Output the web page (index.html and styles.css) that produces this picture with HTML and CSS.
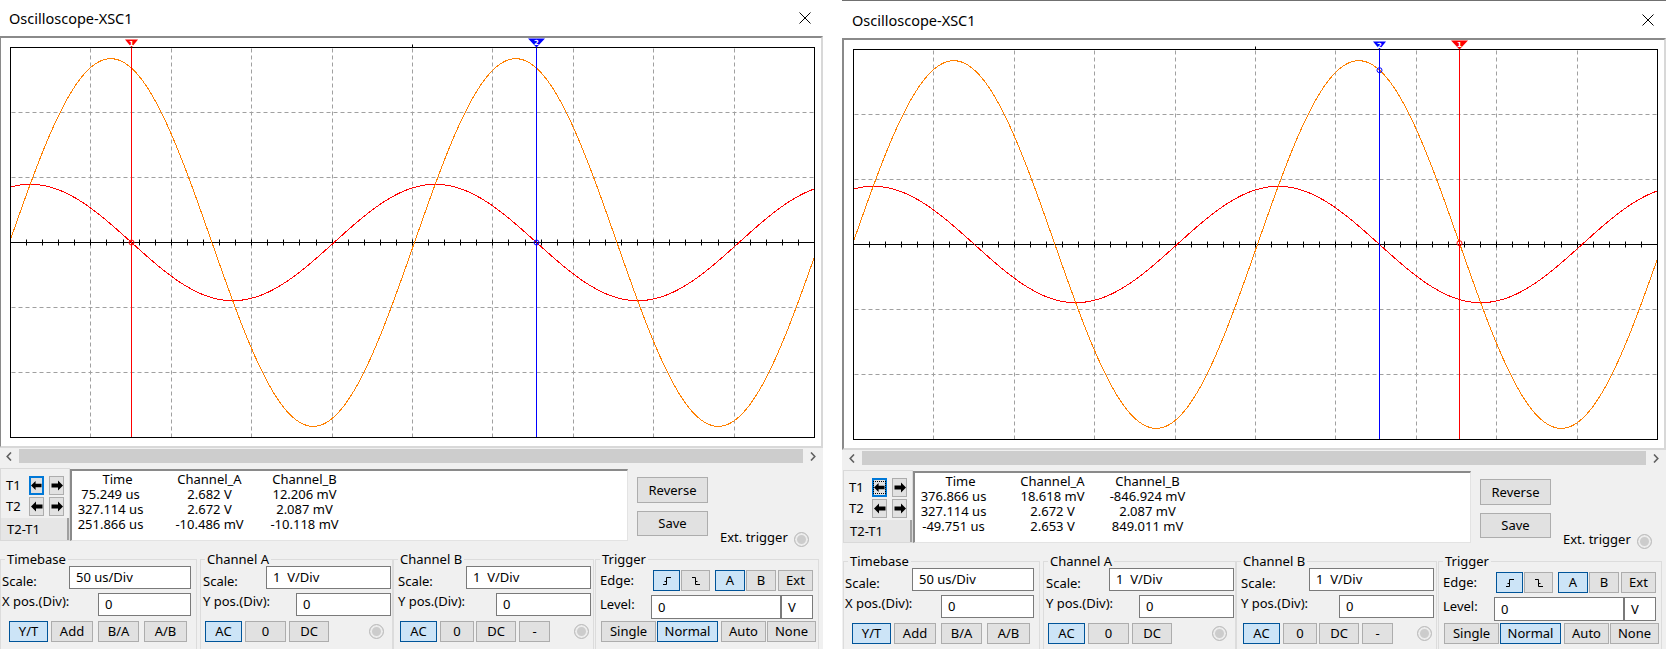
FILE: index.html
```html
<!DOCTYPE html>
<html>
<head>
<meta charset="utf-8">
<title>Oscilloscope-XSC1</title>
<link rel="stylesheet" href="styles.css">
</head>
<body>
<div class="win win-l">
  <div class="titlebar"><span class="title">Oscilloscope-XSC1</span>
    <svg class="close" width="12" height="12" viewBox="0 0 12 12"><path d="M0.5 0.5 L11.5 11.5 M11.5 0.5 L0.5 11.5" stroke="#000" stroke-width="1"/></svg></div>
  <div class="frame"><svg class="plot" width="805" height="400" data-t1="75.249" data-t2="327.114" data-mark="B" data-big="2"></svg></div>
  <div class="hscroll">
    <span class="sbtn"><svg width="6" height="9" viewBox="0 0 6 9"><path d="M5 0.5 L1.2 4.5 L5 8.5" fill="none" stroke="#606060" stroke-width="1.6"/></svg></span>
    <span class="thumb"></span>
    <span class="sbtn"><svg width="6" height="9" viewBox="0 0 6 9"><path d="M1 0.5 L4.8 4.5 L1 8.5" fill="none" stroke="#606060" stroke-width="1.6"/></svg></span>
  </div>
  <div class="panel">
    <div class="toprow">
      <div class="tbox">
        <div class="trow"><span class="tlab">T1</span><span class="abtn focus"><svg width="12" height="11" viewBox="0 0 12 11"><path d="M0 5.5 L5 0.5 L5 3.5 L11.5 3.5 L11.5 7.5 L5 7.5 L5 10.5 Z" fill="#000"/></svg></span><span class="abtn"><svg width="12" height="11" viewBox="0 0 12 11"><path d="M12 5.5 L7 0.5 L7 3.5 L0.5 3.5 L0.5 7.5 L7 7.5 L7 10.5 Z" fill="#000"/></svg></span></div>
        <div class="trow t2"><span class="tlab">T2</span><span class="abtn"><svg width="12" height="11" viewBox="0 0 12 11"><path d="M0 5.5 L5 0.5 L5 3.5 L11.5 3.5 L11.5 7.5 L5 7.5 L5 10.5 Z" fill="#000"/></svg></span><span class="abtn"><svg width="12" height="11" viewBox="0 0 12 11"><path d="M12 5.5 L7 0.5 L7 3.5 L0.5 3.5 L0.5 7.5 L7 7.5 L7 10.5 Z" fill="#000"/></svg></span></div>
        <div class="tdiff">T2-T1</div>
      </div>
      <div class="data">
        <div class="col c1"><div class="hd">Time</div><div>75.249 us</div><div>327.114 us</div><div>251.866 us</div></div>
        <div class="col c2"><div>Channel_A</div><div>2.682 V</div><div>2.672 V</div><div>-10.486 mV</div></div>
        <div class="col c3"><div>Channel_B</div><div>12.206 mV</div><div>2.087 mV</div><div>-10.118 mV</div></div>
      </div>
      <div class="actions"><span class="btn act">Reverse</span><span class="btn act save">Save</span></div>
      <div class="ext"><span>Ext. trigger</span><span class="radio"></span></div>
    </div>
    <div class="groups">
      <fieldset class="g g-tb"><legend>Timebase</legend>
        <div class="gin">
          <div class="row ra"><span class="lab la">Scale:</span><span class="inp tb-s">50 us/Div</span></div>
          <div class="row rb"><span class="lab lb">X pos.(Div):</span><span class="inp tb-p">0</span></div>
          <div class="row rc"><span class="btn on b-yt">Y/T</span><span class="btn b-add">Add</span><span class="btn b-ba">B/A</span><span class="btn b-ab">A/B</span></div>
        </div>
      </fieldset>
      <fieldset class="g g-ca"><legend>Channel A</legend>
        <div class="gin">
          <div class="row ra"><span class="lab la">Scale:</span><span class="inp ch-s">1&nbsp; V/Div</span></div>
          <div class="row rb"><span class="lab lb">Y pos.(Div):</span><span class="inp ch-p">0</span></div>
          <div class="row rc"><span class="btn on b-ac">AC</span><span class="btn b-0">0</span><span class="btn b-dc">DC</span><span class="radio r-ch"></span></div>
        </div>
      </fieldset>
      <fieldset class="g g-cb"><legend>Channel B</legend>
        <div class="gin">
          <div class="row ra"><span class="lab la">Scale:</span><span class="inp ch-s">1&nbsp; V/Div</span></div>
          <div class="row rb"><span class="lab lb">Y pos.(Div):</span><span class="inp ch-p">0</span></div>
          <div class="row rc"><span class="btn on b-ac">AC</span><span class="btn b-0b">0</span><span class="btn b-dcb">DC</span><span class="btn b-min">-</span><span class="radio r-ch"></span></div>
        </div>
      </fieldset>
      <fieldset class="g g-tr"><legend>Trigger</legend>
        <div class="gin">
          <div class="row tra"><span class="lab tlab-e">Edge:</span><span class="btn on e-r"><svg width="12" height="12" viewBox="0 0 12 12"><path d="M2 9.5 H5.5 V2.5 H10 M3.5 6.5 H5.5" fill="none" stroke="#000" stroke-width="1"/></svg></span><span class="btn e-f"><svg width="12" height="12" viewBox="0 0 12 12"><path d="M2 2.5 H5.5 V9.5 H10 M5.5 6.5 H7.5" fill="none" stroke="#000" stroke-width="1"/></svg></span><span class="btn on e-a">A</span><span class="btn e-b">B</span><span class="btn e-x">Ext</span></div>
          <div class="row trb"><span class="lab tlab-l">Level:</span><span class="inp lvl">0</span><span class="inp vbox">V</span></div>
          <div class="row trc"><span class="btn m-s">Single</span><span class="btn on m-n">Normal</span><span class="btn m-a">Auto</span><span class="btn m-o">None</span></div>
        </div>
      </fieldset>
    </div>
  </div>
</div>

<div class="win win-r">
  <div class="titlebar"><span class="title">Oscilloscope-XSC1</span>
    <svg class="close" width="12" height="12" viewBox="0 0 12 12"><path d="M0.5 0.5 L11.5 11.5 M11.5 0.5 L0.5 11.5" stroke="#000" stroke-width="1"/></svg></div>
  <div class="frame"><svg class="plot" width="805" height="400" data-t1="376.866" data-t2="327.114" data-mark="A" data-big="1"></svg></div>
  <div class="hscroll">
    <span class="sbtn"><svg width="6" height="9" viewBox="0 0 6 9"><path d="M5 0.5 L1.2 4.5 L5 8.5" fill="none" stroke="#606060" stroke-width="1.6"/></svg></span>
    <span class="thumb"></span>
    <span class="sbtn"><svg width="6" height="9" viewBox="0 0 6 9"><path d="M1 0.5 L4.8 4.5 L1 8.5" fill="none" stroke="#606060" stroke-width="1.6"/></svg></span>
  </div>
  <div class="panel">
    <div class="toprow">
      <div class="tbox">
        <div class="trow"><span class="tlab">T1</span><span class="abtn focus dotted"><svg width="12" height="11" viewBox="0 0 12 11"><path d="M0 5.5 L5 0.5 L5 3.5 L11.5 3.5 L11.5 7.5 L5 7.5 L5 10.5 Z" fill="#000"/></svg></span><span class="abtn"><svg width="12" height="11" viewBox="0 0 12 11"><path d="M12 5.5 L7 0.5 L7 3.5 L0.5 3.5 L0.5 7.5 L7 7.5 L7 10.5 Z" fill="#000"/></svg></span></div>
        <div class="trow t2"><span class="tlab">T2</span><span class="abtn"><svg width="12" height="11" viewBox="0 0 12 11"><path d="M0 5.5 L5 0.5 L5 3.5 L11.5 3.5 L11.5 7.5 L5 7.5 L5 10.5 Z" fill="#000"/></svg></span><span class="abtn"><svg width="12" height="11" viewBox="0 0 12 11"><path d="M12 5.5 L7 0.5 L7 3.5 L0.5 3.5 L0.5 7.5 L7 7.5 L7 10.5 Z" fill="#000"/></svg></span></div>
        <div class="tdiff">T2-T1</div>
      </div>
      <div class="data">
        <div class="col c1"><div class="hd">Time</div><div>376.866 us</div><div>327.114 us</div><div>-49.751 us</div></div>
        <div class="col c2"><div>Channel_A</div><div>18.618 mV</div><div>2.672 V</div><div>2.653 V</div></div>
        <div class="col c3"><div>Channel_B</div><div>-846.924 mV</div><div>2.087 mV</div><div>849.011 mV</div></div>
      </div>
      <div class="actions"><span class="btn act">Reverse</span><span class="btn act save">Save</span></div>
      <div class="ext"><span>Ext. trigger</span><span class="radio"></span></div>
    </div>
    <div class="groups">
      <fieldset class="g g-tb"><legend>Timebase</legend>
        <div class="gin">
          <div class="row ra"><span class="lab la">Scale:</span><span class="inp tb-s">50 us/Div</span></div>
          <div class="row rb"><span class="lab lb">X pos.(Div):</span><span class="inp tb-p">0</span></div>
          <div class="row rc"><span class="btn on b-yt">Y/T</span><span class="btn b-add">Add</span><span class="btn b-ba">B/A</span><span class="btn b-ab">A/B</span></div>
        </div>
      </fieldset>
      <fieldset class="g g-ca"><legend>Channel A</legend>
        <div class="gin">
          <div class="row ra"><span class="lab la">Scale:</span><span class="inp ch-s">1&nbsp; V/Div</span></div>
          <div class="row rb"><span class="lab lb">Y pos.(Div):</span><span class="inp ch-p">0</span></div>
          <div class="row rc"><span class="btn on b-ac">AC</span><span class="btn b-0">0</span><span class="btn b-dc">DC</span><span class="radio r-ch"></span></div>
        </div>
      </fieldset>
      <fieldset class="g g-cb"><legend>Channel B</legend>
        <div class="gin">
          <div class="row ra"><span class="lab la">Scale:</span><span class="inp ch-s">1&nbsp; V/Div</span></div>
          <div class="row rb"><span class="lab lb">Y pos.(Div):</span><span class="inp ch-p">0</span></div>
          <div class="row rc"><span class="btn on b-ac">AC</span><span class="btn b-0b">0</span><span class="btn b-dcb">DC</span><span class="btn b-min">-</span><span class="radio r-ch"></span></div>
        </div>
      </fieldset>
      <fieldset class="g g-tr"><legend>Trigger</legend>
        <div class="gin">
          <div class="row tra"><span class="lab tlab-e">Edge:</span><span class="btn on e-r"><svg width="12" height="12" viewBox="0 0 12 12"><path d="M2 9.5 H5.5 V2.5 H10 M3.5 6.5 H5.5" fill="none" stroke="#000" stroke-width="1"/></svg></span><span class="btn e-f"><svg width="12" height="12" viewBox="0 0 12 12"><path d="M2 2.5 H5.5 V9.5 H10 M5.5 6.5 H7.5" fill="none" stroke="#000" stroke-width="1"/></svg></span><span class="btn on e-a">A</span><span class="btn e-b">B</span><span class="btn e-x">Ext</span></div>
          <div class="row trb"><span class="lab tlab-l">Level:</span><span class="inp lvl">0</span><span class="inp vbox">V</span></div>
          <div class="row trc"><span class="btn m-s">Single</span><span class="btn on m-n">Normal</span><span class="btn m-a">Auto</span><span class="btn m-o">None</span></div>
        </div>
      </fieldset>
    </div>
  </div>
</div>
<script src="script.js"></script>
</body>
</html>
```
FILE: styles.css
```css
* { box-sizing: border-box; }
html, body { margin: 0; padding: 0; }
body {
  width: 1666px; height: 649px; overflow: hidden; background: #fff;
  display: flex; align-items: flex-start;
  font-family: "Noto Sans", "Open Sans", sans-serif; font-size: 13px; line-height: 15px; color: #000;
}
.win { flex: none; width: 824px; height: 660px; background: #f0f0f0; border-top: 1px solid #707070; }
.win-l { margin-left: -1px; margin-top: -2px; }
.win-r { margin-left: 19px; }

.titlebar { height: 37px; background: #fff; display: flex; align-items: center; justify-content: space-between; padding: 0 12px 0 10px; }
.title { font-size: 14.5px; line-height: 20px; }
.close { display: block; }

.frame { height: 412px; background: #fff; border: 2px solid; border-color: #8a8a8a #d8d8d8 #d8d8d8 #8a8a8a; padding: 0 6px 8px 9px; }
.plot { display: block; }
.plot .grid { stroke: #a0a0a0; stroke-width: 1; stroke-dasharray: 4 3; fill: none; }
.plot .axis { stroke: #000; stroke-width: 1; fill: none; }
.plot .wave { fill: none; stroke-width: 1; }

.hscroll { height: 16px; display: flex; background: #f0f0f0; }
.sbtn { width: 20px; flex: none; display: flex; align-items: center; justify-content: center; }
.thumb { flex: 1; background: #cdcdcd; margin: 1px 0; }

.panel { padding: 4px 0 0 1px; }
.toprow { display: flex; height: 73px; }

.tbox { width: 70px; height: 73px; border: 1px solid #d9d9d9; display: flex; flex-direction: column; padding-top: 7px; }
.trow { display: flex; align-items: center; height: 19px; }
.trow.t2 { margin-top: 2px; }
.tlab { width: 28px; padding-left: 5px; }
.abtn { width: 15px; height: 19px; background: #e1e1e1; border: 1px solid #adadad; display: flex; align-items: center; justify-content: center; margin-right: 5px; }
.abtn.focus { border: 2px solid #0078d7; }
.abtn.dotted svg { outline: 1px dotted #000; }
.tdiff { margin-top: auto; height: 22px; background: #e6e6e6; padding-left: 6px; line-height: 22px; border-right: 2px solid #a0a0a0; }

.data { width: 558px; height: 72px; margin-top: 1px; background: #fff; border-style: solid; border-width: 2px 1px 1px 2px; border-color: #8a8a8a #e3e3e3 #e3e3e3 #8a8a8a; display: flex; padding-top: 1px; }
.col { display: flex; flex-direction: column; align-items: center; white-space: nowrap; }
.c1 { width: 77px; }
.c1 .hd { margin-left: 14px; }
.c2 { width: 121px; }
.c3 { width: 69px; }

.actions { margin-left: 9px; display: flex; flex-direction: column; padding-top: 9px; }
.btn { display: flex; align-items: center; justify-content: center; flex: none; background: #e1e1e1; border: 1px solid #adadad; height: 21px; white-space: nowrap; }
.btn.on { background: #cce4f7; border-color: #005499; }
.act { width: 71px; height: 26px; }
.act.save { margin-top: 8px; height: 25px; }

.ext { margin-left: 12px; margin-top: 61px; display: flex; align-items: center; height: 16px; white-space: nowrap; }
.ext .radio { margin-left: 6px; margin-top: 4px; }
.radio { flex: none; width: 15px; height: 15px; border-radius: 50%; border: 1px solid #bcbcbc; background: #cccccc; box-shadow: inset 0 0 0 2px #ececec; }

.groups { display: flex; margin-top: 11px; }
fieldset.g { margin: 0; padding: 0; border: 1px solid #dcdcdc; height: 110px; min-width: 0; }
fieldset.g legend { margin-left: 4px; padding: 0 2px; line-height: 14px; height: 14px; }
.g-tb { width: 197px; }
.g-ca { width: 193px; margin-left: 3px !important; }
.g-cb { width: 201px; margin-left: 0 !important; }
.g-tr { width: 224px; margin-left: 1px !important; }

.gin { display: flex; flex-direction: column; }
.row { display: flex; align-items: center; }
.ra { height: 23px; justify-content: space-between; }
.rb { height: 23px; margin-top: 4px; justify-content: space-between; }
.rc { height: 21px; margin-top: 5px; }
.la { margin-top: 7px; }
.lb { margin-bottom: 7px; }
.inp { height: 23px; background: #fff; border: 1px solid #7a7a7a; padding-left: 6px; display: flex; align-items: center; white-space: nowrap; }

.g-tb .gin { padding: 0 5px 0 1px; }
.tb-s { width: 122px; }
.tb-p { width: 93px; }
.b-yt { width: 39px; margin-left: 7px; }
.b-add { width: 42px; margin-left: 3px; }
.b-ba { width: 41px; margin-left: 5px; }
.b-ab { width: 43px; margin-left: 5px; }

.g-ca .gin { padding: 0 1px 0 2px; }
.ch-s { width: 125px; }
.ch-p { width: 95px; }
.g-ca .b-ac { width: 37px; margin-left: 2px; }
.b-0 { width: 41px; margin-left: 3px; }
.b-dc { width: 40px; margin-left: 3px; }
.r-ch { margin-left: auto; margin-right: 7px; }

.g-cb .gin { padding: 0 2px 0 4px; }
.g-cb .b-ac { width: 37px; margin-left: 2px; }
.b-0b { width: 34px; margin-left: 3px; }
.b-dcb { width: 40px; margin-left: 2px; }
.b-min { width: 31px; margin-left: 3px; }
.g-cb .r-ch { margin-right: 2px; }

.g-tr .gin { padding: 0 2px 0 4px; }
.tra { height: 21px; margin-top: 4px; }
.trb { height: 24px; margin-top: 4px; }
.trc { height: 21px; margin-top: 2px; }
.tlab-e { width: 53px; }
.tlab-l { width: 51px; margin-bottom: 5px; }
.e-r { width: 27px; }
.e-f { width: 29px; margin-left: 1px; }
.e-a { width: 30px; margin-left: 5px; }
.e-b { width: 30px; margin-left: 1px; }
.e-x { width: 35px; margin-left: 2px; }
.lvl { width: 130px; height: 24px; }
.vbox { width: 32px; height: 24px; margin-left: 0; }
.m-s { width: 55px; margin-left: 1px; }
.m-n { width: 61px; margin-left: 1px; }
.m-a { width: 45px; margin-left: 3px; }
.m-o { width: 49px; margin-left: 1px; }
```
FILE: script.js
```js
(function () {
  var T = 251.865;
  var rad = Math.PI / 180;
  function A(t) { return 2.828 * Math.sin(2 * Math.PI * t / T + 0.94 * rad); }
  function B(t) { return 0.895 * Math.sin(2 * Math.PI * t / T + 72.44 * rad); }
  var W = 804, H = 390, DX = 80.4, DY = 65, CY = 195, TOP = 9;
  function xOf(t) { return Math.round(t / 50 * DX); }
  function wave(f, color) {
    var pts = [];
    for (var px = 0; px <= W; px++) {
      var t = px / DX * 50;
      pts.push(px + ',' + (CY - DY * f(t)).toFixed(2));
    }
    return '<polyline class="wave" shape-rendering="crispEdges" stroke="' + color + '" points="' + pts.join(' ') + '"/>';
  }
  function marker(x, color, num, big) {
    var w = big ? 17 : 13, h = big ? 9 : 8;
    var s = '<path d="M' + (x - w / 2) + ' ' + (-h) + ' H' + (x + w / 2) + ' L' + x + ' 0 Z" fill="' + color + '"/>';
    s += '<text x="' + x + '" y="' + (-h + 6.5) + '" text-anchor="middle" font-size="7" font-weight="bold" font-family="DejaVu Sans, sans-serif" fill="#fff">' + num + '</text>';
    return s;
  }
  var svgs = document.querySelectorAll('svg.plot');
  for (var n = 0; n < svgs.length; n++) {
    var svg = svgs[n];
    var t1 = parseFloat(svg.getAttribute('data-t1'));
    var t2 = parseFloat(svg.getAttribute('data-t2'));
    var ch = svg.getAttribute('data-mark') === 'A' ? A : B;
    var big = svg.getAttribute('data-big');
    var s = '<g transform="translate(0.5 ' + (TOP + 0.5) + ')">';
    for (var i = 1; i < 10; i++) {
      var gx = Math.round(i * DX);
      s += '<line class="grid" x1="' + gx + '" y1="1" x2="' + gx + '" y2="' + H + '"/>';
    }
    [1, 2, 4, 5].forEach(function (j) {
      s += '<line class="grid" x1="1" y1="' + j * DY + '" x2="' + W + '" y2="' + j * DY + '"/>';
    });
    s += '<line class="axis" x1="0" y1="' + CY + '" x2="' + W + '" y2="' + CY + '"/>';
    for (var k = 1; k < 50; k++) {
      var tx = Math.round(k * DX / 5);
      s += '<line class="axis" x1="' + tx + '" y1="' + (CY - 3) + '" x2="' + tx + '" y2="' + (CY + 3) + '"/>';
    }
    s += '<line class="axis" x1="402" y1="-3" x2="402" y2="0"/>';
    s += wave(B, '#ff0000');
    s += wave(A, '#ff8000');
    var x1 = xOf(t1), x2 = xOf(t2);
    s += '<line x1="' + x1 + '" y1="0" x2="' + x1 + '" y2="' + H + '" stroke="#ff0000" stroke-width="1"/>';
    s += '<line x1="' + x2 + '" y1="0" x2="' + x2 + '" y2="' + H + '" stroke="#0000ff" stroke-width="1"/>';
    s += '<circle cx="' + x1 + '" cy="' + (CY - DY * ch(t1)).toFixed(1) + '" r="2.5" fill="none" stroke="#ff0000"/>';
    s += '<circle cx="' + x2 + '" cy="' + (CY - DY * ch(t2)).toFixed(1) + '" r="2.5" fill="none" stroke="#0000ff"/>';
    s += '<rect x="0" y="0" width="' + W + '" height="' + H + '" fill="none" stroke="#000" stroke-width="1"/>';
    s += marker(x1, '#ff0000', '1', big === '1');
    s += marker(x2, '#0000ff', '2', big === '2');
    s += '</g>';
    svg.innerHTML = s;
  }
})();
```
